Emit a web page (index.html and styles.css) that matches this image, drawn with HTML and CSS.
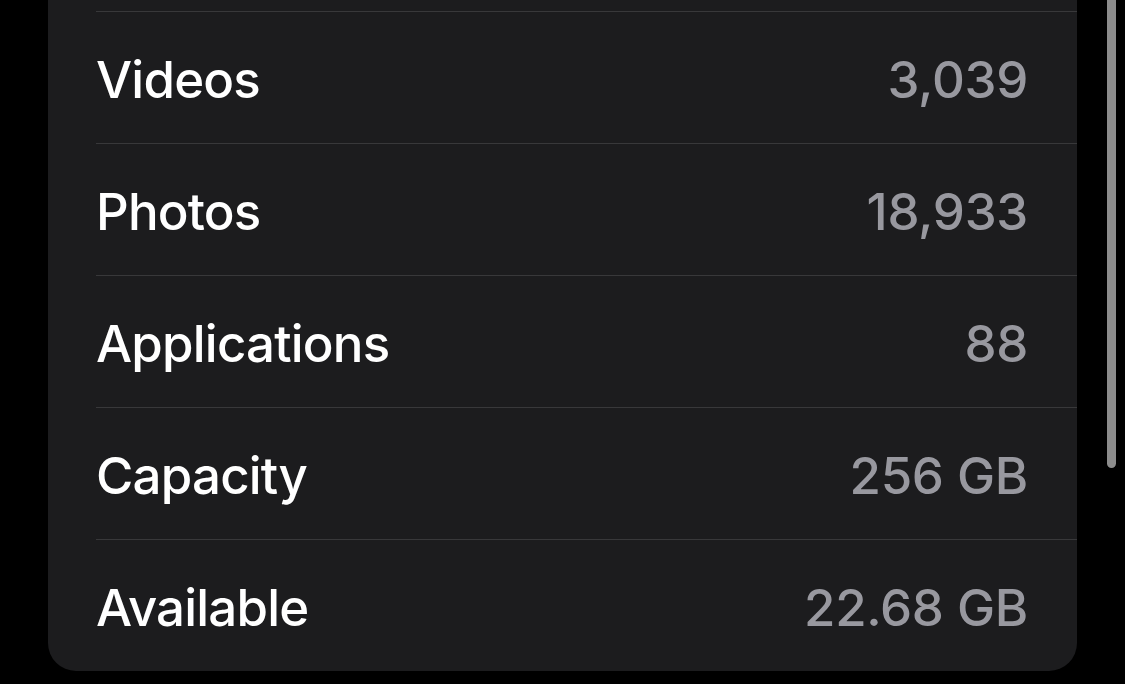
FILE: index.html
```html
<!DOCTYPE html>
<html lang="en">
<head>
  <meta charset="UTF-8">
  <meta name="viewport" content="width=device-width, initial-scale=1.0">
  <title>About</title>
  <link rel="stylesheet" href="styles.css">
</head>
<body>
  <div class="page">
    <ul class="card">
      <li class="row"><span class="label">Videos</span><span class="value">3,039</span></li>
      <li class="row"><span class="label">Photos</span><span class="value">18,933</span></li>
      <li class="row"><span class="label">Applications</span><span class="value">88</span></li>
      <li class="row"><span class="label">Capacity</span><span class="value">256 GB</span></li>
      <li class="row"><span class="label">Available</span><span class="value">22.68 GB</span></li>
    </ul>
  </div>
  <div class="scrollbar"></div>
</body>
</html>
```

FILE: styles.css
```css
* {
  margin: 0;
  padding: 0;
  list-style: none;
  box-sizing: border-box;
}

body {
  background: #000;
  font-family: Inter, "Liberation Sans", sans-serif;
  height: 684px;
  overflow: hidden;
}

.page {
  padding-left: 48px;
}

.card {
  width: 1029px;
  padding-top: 11px;
  background: #1c1c1e;
  border-radius: 0 0 28px 28px;
}

.row {
  display: flex;
  justify-content: space-between;
  align-items: center;
  height: 132px;
  margin-left: 48px;
  padding-top: 3px;
  padding-right: 49px;
  border-top: 1px solid #38383a;
}

.label {
  color: #fff;
  font-size: 51px;
  font-weight: 500;
  letter-spacing: -0.8px;
}

.value {
  color: #98989f;
  font-size: 51px;
  font-weight: 500;
  letter-spacing: -0.3px;
}

.scrollbar {
  position: absolute;
  left: 1107px;
  top: -10px;
  width: 9px;
  height: 478px;
  background: #8c8c8c;
  border-radius: 5px;
}
```
